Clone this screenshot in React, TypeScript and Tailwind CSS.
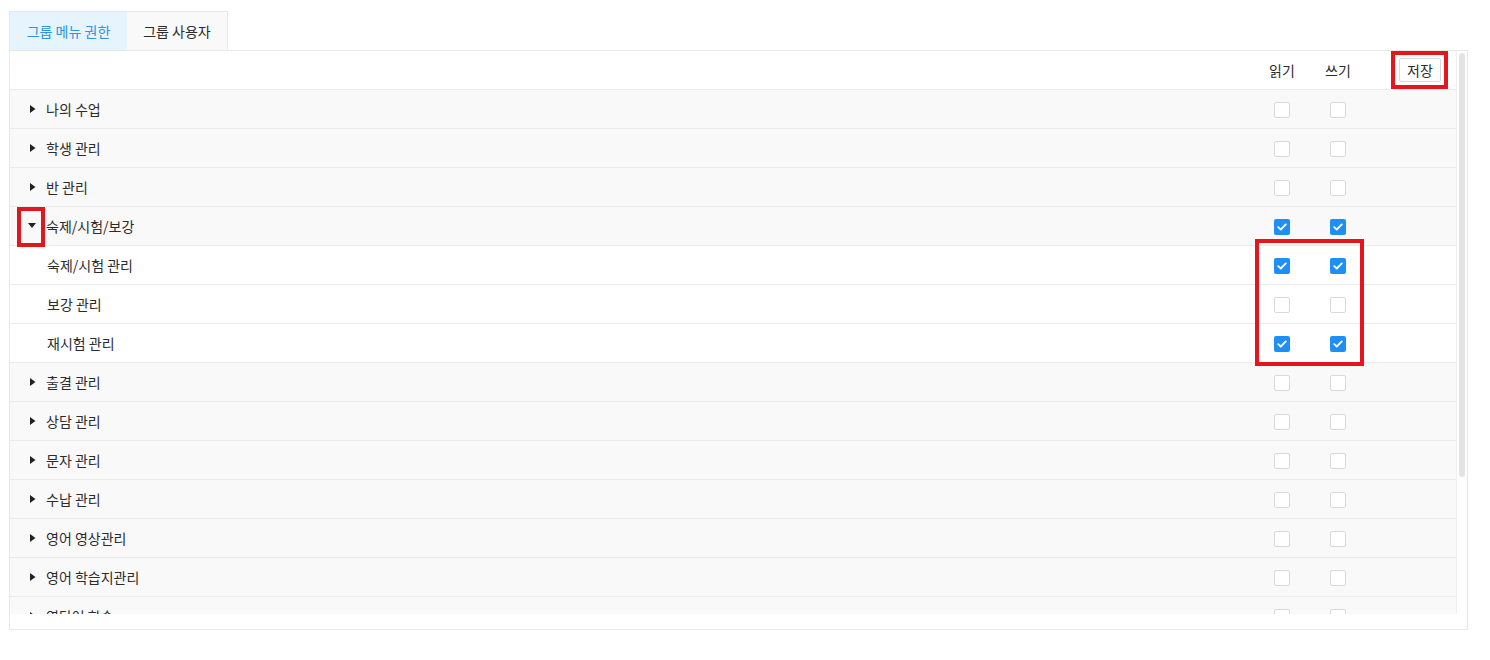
import React from "react";

type Row = { label: string; kind: "parent" | "open" | "child"; read: boolean; write: boolean };

const rows: Row[] = [
  { label: "나의 수업", kind: "parent", read: false, write: false },
  { label: "학생 관리", kind: "parent", read: false, write: false },
  { label: "반 관리", kind: "parent", read: false, write: false },
  { label: "숙제/시험/보강", kind: "open", read: true, write: true },
  { label: "숙제/시험 관리", kind: "child", read: true, write: true },
  { label: "보강 관리", kind: "child", read: false, write: false },
  { label: "재시험 관리", kind: "child", read: true, write: true },
  { label: "출결 관리", kind: "parent", read: false, write: false },
  { label: "상담 관리", kind: "parent", read: false, write: false },
  { label: "문자 관리", kind: "parent", read: false, write: false },
  { label: "수납 관리", kind: "parent", read: false, write: false },
  { label: "영어 영상관리", kind: "parent", read: false, write: false },
  { label: "영어 학습지관리", kind: "parent", read: false, write: false },
  { label: "영단어 학습", kind: "parent", read: false, write: false },
];

function Check({ on }: { on: boolean }) {
  if (on) {
    return (
      <span className="flex h-[16px] w-[16px] items-center justify-center rounded-[2px] bg-[#1e8ff5]">
        <svg width="10" height="8" viewBox="0 0 10 8" fill="none">
          <path d="M1.2 4.1 L3.8 6.5 L8.8 1.4" stroke="white" strokeWidth="1.8" strokeLinecap="round" strokeLinejoin="round" />
        </svg>
      </span>
    );
  }
  return <span className="block h-[16px] w-[16px] rounded-[2px] border border-[#d9d9d9] bg-white" />;
}

export default function App() {
  return (
    <div
      className="relative h-[660px] w-[1490px] bg-white pl-[9px] pt-[11px] text-[14px] text-[#2b2b2b]"
      style={{ fontFamily: '"Noto Sans CJK KR", "Noto Sans", sans-serif' }}
    >
      <div className="flex h-[39px]">
        <div className="flex w-[118px] items-center justify-center border-l border-t border-[#e8e8e8] bg-[#e6f4fe] text-[#2f93e0]">
          그룹 메뉴 권한
        </div>
        <div className="flex w-[101px] items-center justify-center border-r border-t border-[#e8e8e8] bg-[#f9f9f9] text-[#2b2b2b]">
          그룹 사용자
        </div>
      </div>
      <div className="flex h-[580px] w-[1459px] flex-col border border-[#e8e8e8] bg-white">
        <div className="flex h-[563px]">
          <div className="flex-1 overflow-hidden border-r border-[#efefef]">
            <div className="flex h-[39px] items-center border-b border-[#ebebeb] bg-white">
              <div className="flex-1" />
              <div className="w-[56px] text-center">읽기</div>
              <div className="w-[56px] text-center">쓰기</div>
              <div className="w-[90px] pl-[33px]">
                <button className="flex h-[24px] w-[42px] items-center justify-center rounded-[2px] border border-[#d9d9d9] bg-white text-[14px] text-[#2b2b2b]">
                  저장
                </button>
              </div>
            </div>
            {rows.map((r) => (
              <div
                key={r.label}
                className={`flex h-[39px] items-center border-b border-[#ebebeb] ${r.kind === "child" ? "bg-white" : "bg-[#f9f9f9]"}`}
              >
                <div className="flex flex-1 items-center">
                  {r.kind === "child" ? (
                    <span className="pl-[37px]">{r.label}</span>
                  ) : (
                    <>
                      <span className="flex w-[36px] justify-end pr-[10px]">
                        {r.kind === "open" ? (
                          <svg width="8" height="6" viewBox="0 0 8 6">
                            <path d="M0 0 H8 L4 5 Z" fill="#222" />
                          </svg>
                        ) : (
                          <svg width="6" height="8" viewBox="0 0 6 8">
                            <path d="M0 0 V8 L5.5 4 Z" fill="#222" />
                          </svg>
                        )}
                      </span>
                      <span>{r.label}</span>
                    </>
                  )}
                </div>
                <div className="flex w-[56px] justify-center pt-[1px]">
                  <Check on={r.read} />
                </div>
                <div className="flex w-[56px] justify-center pt-[1px]">
                  <Check on={r.write} />
                </div>
                <div className="w-[90px]" />
              </div>
            ))}
          </div>
          <div className="w-[10px] bg-white pl-[2px] pt-[2px]">
            <div className="h-[424px] w-[6px] rounded-[3px] bg-[#e3e3e3]" />
          </div>
        </div>
      </div>

      {/* annotation boxes */}
      <div className="absolute left-[1391px] top-[51px] h-[38px] w-[57px] border-[4px] border-[#e3161e]" />
      <div className="absolute left-[17px] top-[207px] h-[40px] w-[28px] border-[4px] border-[#e3161e]" />
      <div className="absolute left-[1255px] top-[239px] h-[127px] w-[109px] border-[4px] border-[#e3161e]" />
    </div>
  );
}
